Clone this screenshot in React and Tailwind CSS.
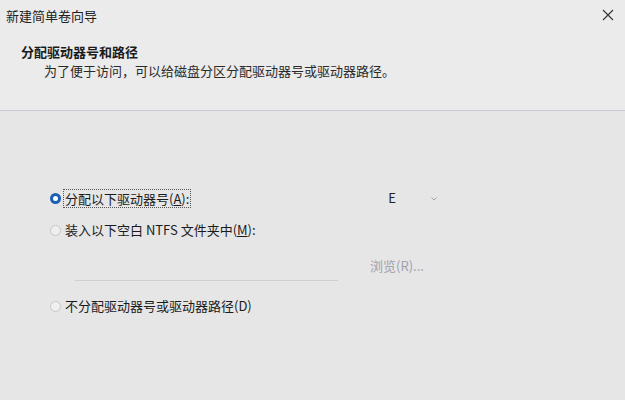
const font = { fontFamily: '"Noto Sans CJK SC", "Noto Sans", sans-serif' };

const Radio = ({ checked }) => (
  <span
    className={`inline-block w-[11px] h-[11px] rounded-full shrink-0 ${
      checked ? 'border-[3px] border-[#1a5fb4] bg-white' : 'border border-[#c6c6c6] bg-[#efefef]'
    }`}
  />
);

const App = () => {
  return (
    <div className="w-[625px] h-[400px] bg-[#e6e6e6] text-[13px] text-[#1b1b1b] flex flex-col overflow-hidden" style={font}>
      <div className="bg-[#ebebeb] border-b border-[#c9c7d8]">
        <div className="h-[32px] flex items-center justify-between pl-[6px] pr-[11px]">
          <span className="text-[13px] text-[#222]">新建简单卷向导</span>
          <svg width="12" height="12" viewBox="0 0 12 12" className="mt-[-2px]">
            <path d="M1 1 L11 11 M11 1 L1 11" stroke="#333" strokeWidth="1.1" />
          </svg>
        </div>
        <div className="pl-[21px] pt-[11px] pb-[30px]">
          <div className="font-bold leading-[18px]">分配驱动器号和路径</div>
          <div className="pl-[23px] leading-[19px] text-[#2a2a2a]">为了便于访问，可以给磁盘分区分配驱动器号或驱动器路径。</div>
        </div>
      </div>

      <div className="pl-[50px] pt-[76px] flex flex-col">
        <div className="flex items-center h-[22px]">
          <Radio checked />
          <span className="ml-[2px] px-[1px] border border-dotted border-[#555] leading-[17px]">分配以下驱动器号(<span className="underline">A</span>):</span>
          <span className="ml-[197px] w-[12px] text-[#222]">E</span>
          <svg width="8" height="6" viewBox="0 0 8 6" className="ml-[30px] mt-[2px]">
            <path d="M1.5 1.5 L4 4 L6.5 1.5" stroke="#9a9a9a" strokeWidth="0.9" fill="none" />
          </svg>
        </div>
        <div className="flex items-center h-[22px] mt-[10px]">
          <Radio />
          <span className="ml-[4px]">装入以下空白 NTFS 文件夹中(<span className="underline">M</span>):</span>
        </div>
        <div className="flex items-end h-[40px]">
          <div className="ml-[25px] w-[263px] h-[21px] border-b border-[#cfcfcf]" />
          <span className="ml-[32px] mb-[6px] text-[#a0a0ae]">浏览(R)...</span>
        </div>
        <div className="flex items-center h-[22px] mt-[14px]">
          <Radio />
          <span className="ml-[4px]">不分配驱动器号或驱动器路径(D)</span>
        </div>
      </div>
    </div>
  );
};

export default App;
